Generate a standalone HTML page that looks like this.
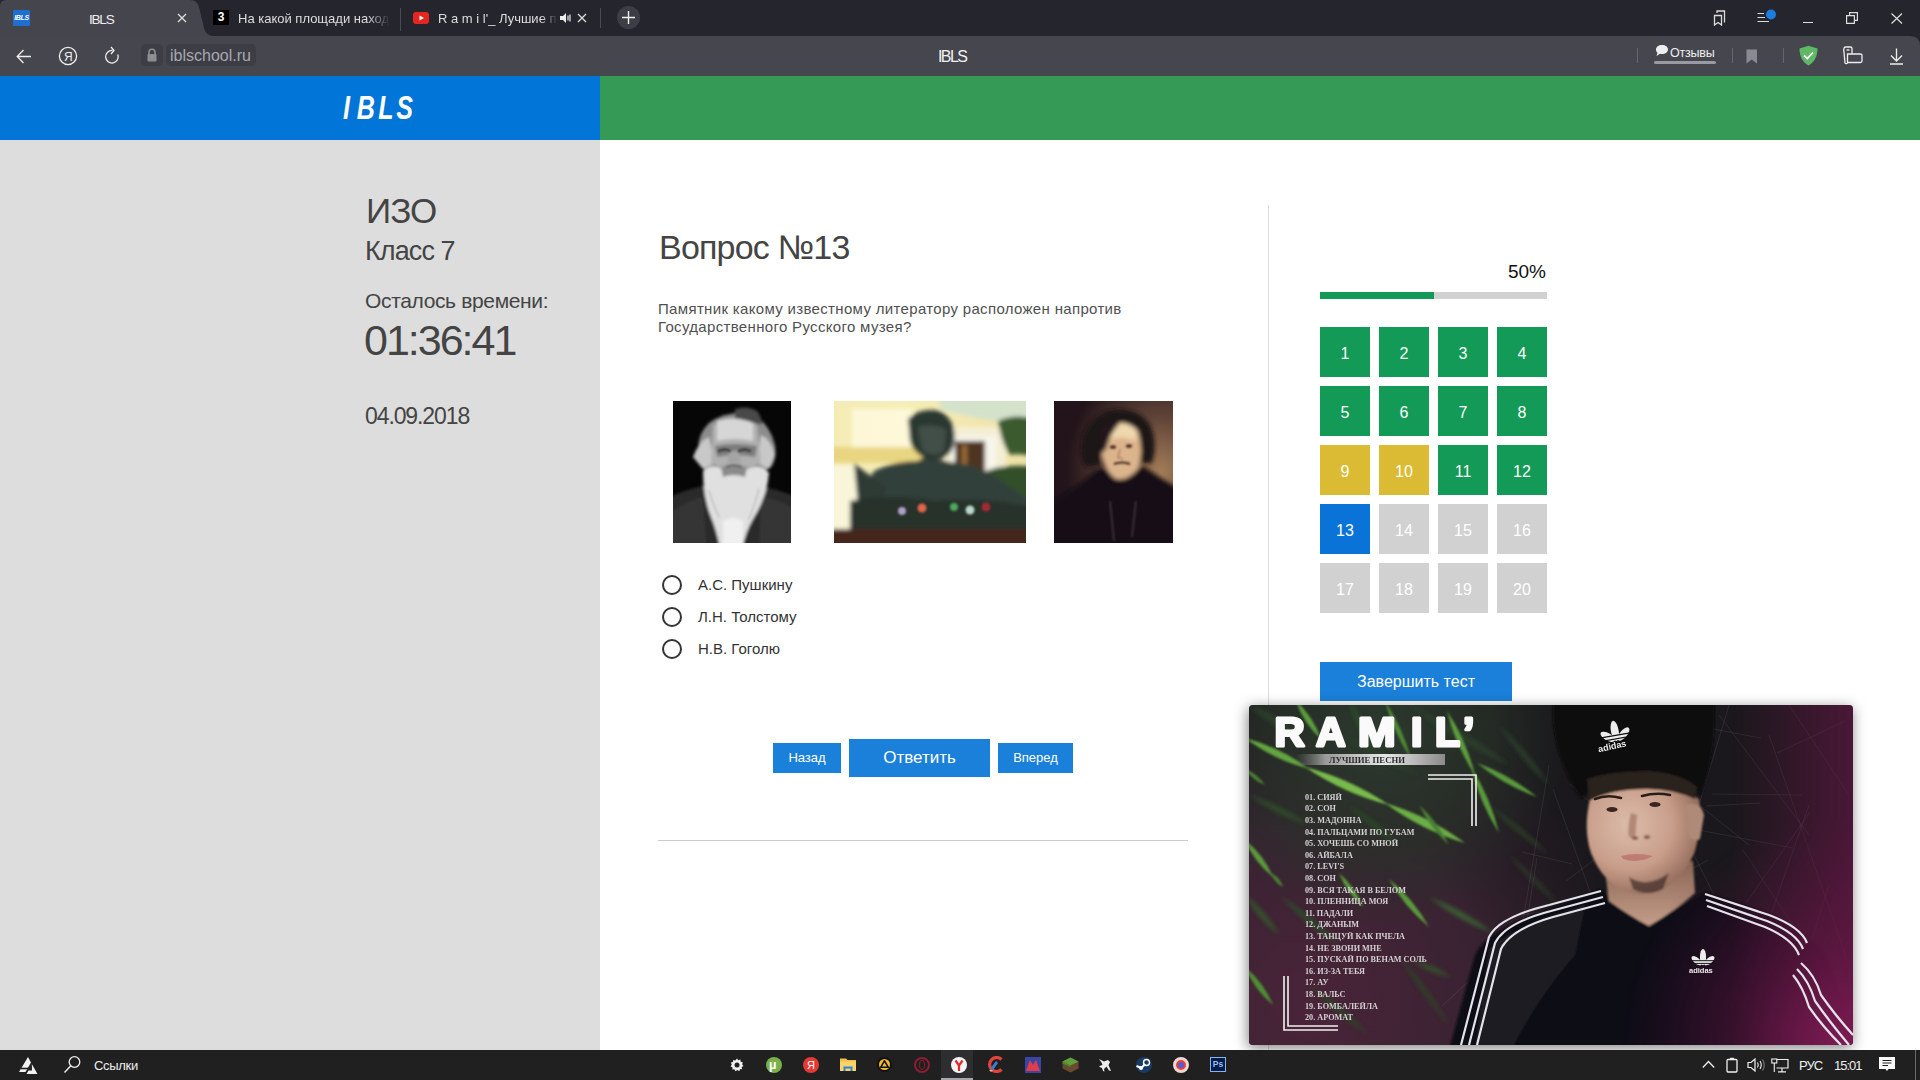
<!DOCTYPE html>
<html><head><meta charset="utf-8">
<style>
*{margin:0;padding:0;box-sizing:border-box}
html,body{width:1920px;height:1080px;overflow:hidden;background:#fff;font-family:"Liberation Sans",sans-serif}
.a{position:absolute}
#tabs{left:0;top:0;width:1920px;height:36px;background:#24252d}
#addr{left:0;top:36px;width:1920px;height:40px;background:#46464e}
#hb{left:0;top:76px;width:600px;height:64px;background:#0275d8}
#hg{left:600px;top:76px;width:1320px;height:64px;background:#369a57}
#side{left:0;top:140px;width:600px;height:910px;background:#dddddd}
#task{left:0;top:1050px;width:1920px;height:30px;background:#202020}
.t{white-space:nowrap;color:#444;line-height:1}
.cell{position:absolute;width:50px;height:50px;color:#fff;font-size:16px;text-align:center;line-height:53px}
.g{background:#129a56}.y{background:#dcbb34}.b{background:#0a73d7}.n{background:#d1d1d1}
.btn{position:absolute;background:#1a80d9;color:#fff;text-align:center;white-space:nowrap}
.radio{position:absolute;width:20px;height:20px;border:2px solid #333;border-radius:50%}
</style></head><body>
<div id="tabs" class="a"></div>
<div id="addr" class="a"></div>

<!-- active tab -->
<svg class="a" style="left:0;top:0" width="220" height="36" viewBox="0 0 220 36"><path d="M0 36 L0 6 Q0 0 6 0 L190 0 Q197 0 199 7 L204 28 Q206 36 214 36 Z" fill="#45454e"/></svg>
<div class="a" style="left:13px;top:10px;width:17px;height:16px;background:#1f6fd0;border-radius:1px;color:#fff;font:italic bold 7px/16px 'Liberation Sans',sans-serif;text-align:center;letter-spacing:-0.3px">IBLS</div>
<div class="a t" style="left:89px;top:13px;font-size:13.5px;color:#eee;letter-spacing:-1.2px">IBLS</div>
<svg class="a" style="left:177px;top:13px" width="10" height="10"><path d="M1 1L9 9M9 1L1 9" stroke="#ddd" stroke-width="1.3"/></svg>
<!-- tab2 -->
<div class="a" style="left:213px;top:10px;width:16px;height:15px;background:#000;color:#fff;font:bold 12px/15px 'Liberation Sans',sans-serif;text-align:center">3</div>
<div class="a t" style="left:238px;top:12px;padding-bottom:3px;font-size:13px;color:#ddd;width:152px;overflow:hidden;-webkit-mask-image:linear-gradient(90deg,#000 85%,transparent)">На какой площади находится</div>
<div class="a" style="left:400px;top:8px;width:1px;height:23px;background:#4a4b52"></div>
<!-- tab3 -->
<svg class="a" style="left:413px;top:12px" width="16" height="12"><rect x="0" y="0" width="16" height="12" rx="3" fill="#e52620"/><path d="M6.5 3.5L11 6L6.5 8.5Z" fill="#fff"/></svg>
<div class="a t" style="left:438px;top:12px;padding-bottom:3px;font-size:13px;color:#ddd;width:120px;overflow:hidden;-webkit-mask-image:linear-gradient(90deg,#000 86%,transparent)">R a m i l'_ Лучшие песни</div>
<svg class="a" style="left:560px;top:13px" width="11" height="10"><path d="M0 3H3L6 0V10L3 7H0Z" fill="#eee"/><path d="M8 2.5V7.5M10 1.5V8.5" stroke="#eee" stroke-width="1.2"/></svg>
<svg class="a" style="left:577px;top:13px" width="10" height="10"><path d="M1 1L9 9M9 1L1 9" stroke="#ddd" stroke-width="1.3"/></svg>
<div class="a" style="left:600px;top:8px;width:1px;height:20px;background:#4a4b52"></div>
<div class="a" style="left:617px;top:6px;width:23px;height:23px;border-radius:50%;background:#3c3d45"></div>
<svg class="a" style="left:622px;top:11px" width="13" height="13"><path d="M6.5 0V13M0 6.5H13" stroke="#eee" stroke-width="1.4"/></svg>
<!-- window controls -->
<svg class="a" style="left:1712px;top:10px" width="16" height="16"><path d="M2.5 5.5H9.5V15L6 12.5L2.5 15Z M5 3V1H12.5V12.5" fill="none" stroke="#ddd" stroke-width="1.3"/></svg>
<svg class="a" style="left:1756px;top:8px" width="22" height="16"><path d="M1.5 5.5H8M1.5 9.5H9M1.5 13.5H13" stroke="#ddd" stroke-width="1.2"/><circle cx="15" cy="6.5" r="5" fill="#1c7ce0"/></svg>
<div class="a" style="left:1803px;top:22px;width:10px;height:1px;background:#ddd"></div>
<svg class="a" style="left:1846px;top:12px" width="12" height="12"><path d="M0.6 3.6H8.4V11.4H0.6Z M3.6 3.6V0.6H11.4V8.4H8.4" fill="none" stroke="#ddd" stroke-width="1.2"/></svg>
<svg class="a" style="left:1891px;top:13px" width="12" height="11"><path d="M0.5 0.5L11 10.5M11 0.5L0.5 10.5" stroke="#ddd" stroke-width="1.2"/></svg>

<svg class="a" style="left:1910px;top:36px" width="10" height="10"><path d="M0 0H10V10Q10 0 0 0Z" fill="#24252d"/></svg>
<!-- address bar items -->
<svg class="a" style="left:16px;top:49px" width="16" height="15"><path d="M15 7.5H1.5M7.5 1L1.2 7.5L7.5 14" fill="none" stroke="#eee" stroke-width="1.3"/></svg>
<svg class="a" style="left:58px;top:46px" width="20" height="20"><circle cx="10" cy="10" r="8.6" fill="none" stroke="#eee" stroke-width="1.3"/><text x="10.3" y="14.8" font-family="Liberation Sans" font-size="12" fill="#eee" text-anchor="middle">Я</text></svg>
<svg class="a" style="left:104px;top:46px" width="17" height="19"><path d="M13.8 8.5A6.3 6.3 0 1 1 8.5 4.5" fill="none" stroke="#eee" stroke-width="1.3"/><path d="M7 1L10 4.5L7 8" fill="none" stroke="#eee" stroke-width="1.3"/></svg>
<div class="a" style="left:141px;top:44px;width:22px;height:22px;border-radius:5px;background:#3d3d45"></div>
<svg class="a" style="left:146px;top:48px" width="12" height="14"><path d="M3 6V4.2A3 3 0 0 1 9 4.2V6" fill="none" stroke="#8d8d94" stroke-width="1.6"/><rect x="1.5" y="6" width="9" height="7.5" rx="1" fill="#8d8d94"/></svg>
<div class="a" style="left:166px;top:44px;width:90px;height:22px;border-radius:5px;background:#3d3d45"></div>
<div class="a t" style="left:170px;top:48px;font-size:16px;color:#a8a8b0;letter-spacing:0px">iblschool.ru</div>
<div class="a t" style="left:938px;top:49px;font-size:16px;color:#f2f2f2;letter-spacing:-1.6px">IBLS</div>

<div class="a" style="left:1637px;top:48px;width:1px;height:15px;background:#66666e"></div>
<svg class="a" style="left:1655px;top:44px" width="14" height="13"><path d="M7 1C10.5 1 13 3 13 5.5C13 8 10.5 10 7 10C6.3 10 5.6 9.9 5 9.7L1.5 12L2.5 8.8C1.5 8 1 6.8 1 5.5C1 3 3.5 1 7 1Z" fill="#eee"/></svg>
<div class="a t" style="left:1670px;top:46.5px;font-size:12.5px;color:#eee;letter-spacing:-0.2px">Отзывы</div>
<div class="a" style="left:1654px;top:61px;width:62px;height:3px;border-radius:2px;background:#9a9aa2"></div>
<div class="a" style="left:1732px;top:48px;width:1px;height:15px;background:#66666e"></div>
<svg class="a" style="left:1746px;top:49px" width="12" height="15"><path d="M0.5 0.5H11V14.5L5.75 10.5L0.5 14.5Z" fill="#8a8a92"/></svg>
<div class="a" style="left:1783px;top:48px;width:1px;height:15px;background:#66666e"></div>
<svg class="a" style="left:1798px;top:45px" width="21" height="21"><path d="M10.5 0.8L19.5 3.5C19.5 12 16 17.5 10.5 20.5C5 17.5 1.5 12 1.5 3.5Z" fill="#5fb865"/><path d="M6 10.5L9.3 13.6L15 7.5" fill="none" stroke="#fff" stroke-width="1.8"/></svg>
<svg class="a" style="left:1842px;top:46px" width="21" height="19"><path d="M3.5 1H8.5A1.5 1.5 0 0 1 10 2.5V8H5.5V17A1.5 1.5 0 0 1 3 17L2 6A5 5 0 0 1 2 2.5A1.5 1.5 0 0 1 3.5 1Z M10 8H18.5A1.5 1.5 0 0 1 20 9.5V15A1.5 1.5 0 0 1 18.5 16.5H6" fill="none" stroke="#eee" stroke-width="1.3"/><path d="M4.5 4H7.5" stroke="#eee" stroke-width="1.3"/></svg>
<svg class="a" style="left:1889px;top:48px" width="15" height="17"><path d="M7.5 0.5V13M2 7.5L7.5 13L13 7.5M1 16H14" fill="none" stroke="#eee" stroke-width="1.3"/></svg>
<div id="hb" class="a"></div>
<div id="hg" class="a"></div>
<svg class="a" style="left:340px;top:88px" width="80" height="36"><g transform="scale(0.76,1)" font-family="Liberation Sans" font-style="italic" font-weight="bold" font-size="33" fill="#fff"><text x="4" y="31.5">I</text><text x="22" y="31.5">B</text><text x="50.5" y="31.5">L</text><text x="74" y="31.5">S</text></g></svg>
<div id="side" class="a"></div>

<!-- sidebar text -->
<div class="a t" style="left:366px;top:193px;font-size:35px;letter-spacing:-1px">ИЗО</div>
<div class="a t" style="left:365px;top:238px;font-size:27px;letter-spacing:-0.9px">Класс 7</div>
<div class="a t" style="left:365px;top:290px;font-size:21px;letter-spacing:-0.35px">Осталось времени:</div>
<div class="a t" style="left:364px;top:319px;font-size:43px;letter-spacing:-2px">01:36:41</div>
<div class="a t" style="left:365px;top:405px;font-size:23px;letter-spacing:-1.1px">04.09.2018</div>

<!-- question -->
<div class="a t" style="left:659px;top:230px;font-size:34px;letter-spacing:-0.8px">Вопрос №13</div>
<div class="a t" style="left:658px;top:300px;font-size:15px;line-height:18px;letter-spacing:0.33px;color:#505050">Памятник какому известному литератору расположен напротив<br>Государственного Русского музея?</div>


<!-- portraits -->
<svg class="a" style="left:673px;top:401px" width="118" height="142" viewBox="0 0 118 142">
<defs><filter id="b1" x="-20%" y="-20%" width="140%" height="140%"><feGaussianBlur stdDeviation="1.8"/></filter><filter id="b1s" x="-50%" y="-50%" width="200%" height="200%"><feGaussianBlur stdDeviation="0.9"/></filter></defs>
<rect width="118" height="142" fill="#060606"/>
<g filter="url(#b1)">
<path d="M-10 100Q10 88 36 84L82 84Q106 88 128 98V152H-10Z" fill="#2a2a2a"/>
<path d="M0 110Q14 100 30 96L34 152H-10Z M118 106Q104 98 88 96L86 152H128Z" fill="#343434"/>
<path d="M26 56Q22 36 36 22Q52 10 76 12Q96 20 102 44Q104 58 98 66L92 70H32Z" fill="#8c8c8c"/>
<path d="M62 8Q74 4 84 10Q90 18 88 24Q74 18 62 20Z" fill="#4a4a4a"/>
<path d="M20 56Q26 40 36 36L42 62L30 68Z M102 54Q98 38 88 34L84 62L96 68Z" fill="#c8c8c8"/>
<path d="M40 24Q60 14 84 24L88 62Q62 74 38 62Z" fill="#b0b0b0"/>
<path d="M44 20Q62 14 80 22L80 40Q62 36 44 40Z" fill="#d6d6d6"/>
<path d="M42 45Q62 41 84 45L82 56Q62 52 44 56Z" fill="#7c7c7c"/>
<path d="M56 50L66 50L68 64L54 64Z" fill="#a4a4a4"/>
<path d="M30 70Q38 62 50 68Q62 74 74 68Q88 62 96 72Q94 96 80 118Q72 132 68 152H48Q44 130 38 116Q30 96 30 70Z" fill="#e0e0e0"/>
<path d="M48 66Q60 62 74 66L72 76Q60 72 50 76Z" fill="#8a8a8a"/>
<path d="M50 120Q60 114 70 120L70 152H50Z" fill="#f0f0f0"/>
</g>
<g filter="url(#b1s)" fill="none" stroke-linecap="round">
<path d="M46 50Q52 47 57 50M66 50Q72 47 77 50" stroke="#2a2a2a" stroke-width="2"/>
<path d="M54 66Q61 63 68 66" stroke="#5a5a5a" stroke-width="1.6"/>
<path d="M36 90Q40 104 46 116M86 88Q82 104 76 118" stroke="#c0c0c0" stroke-width="1.5"/>
</g>
</svg>

<svg class="a" style="left:834px;top:401px" width="192" height="142" viewBox="0 0 192 142">
<defs><filter id="b2" x="-20%" y="-20%" width="140%" height="140%"><feGaussianBlur stdDeviation="2"/></filter><filter id="b2s" x="-50%" y="-50%" width="200%" height="200%"><feGaussianBlur stdDeviation="1.1"/></filter>
<linearGradient id="pbg" x1="0" y1="0" x2="1" y2="0"><stop offset="0" stop-color="#f4ecb4"/><stop offset="0.35" stop-color="#f6eeb8"/><stop offset="1" stop-color="#efe2a6"/></linearGradient></defs>
<rect width="192" height="142" fill="url(#pbg)"/>
<g filter="url(#b2)">
<rect x="18" y="8" width="60" height="40" fill="#fffae0" opacity="0.8"/>
<rect x="-10" y="46" width="100" height="16" fill="#e6cf74" opacity="0.8"/>
<rect x="-10" y="64" width="34" height="70" fill="#faf6dc" opacity="0.9"/>
<path d="M106 -10H202V20L176 22Q140 18 106 8Z" fill="#d4e2cc"/>
<rect x="112" y="26" width="60" height="70" fill="#f4eed4"/>
<rect x="117" y="35" width="45" height="48" fill="#f8f6ec"/>
<rect x="121" y="40" width="30" height="42" fill="#4e3420"/>
<rect x="128" y="44" width="5" height="36" fill="#9a6a38"/>
<path d="M164 20Q180 12 202 18V56Q186 52 176 54Q168 44 164 20Z" fill="#3a5a2e"/>
<path d="M148 72Q168 62 202 66V132H152Z" fill="#33502c"/>
<path d="M40 70Q60 60 84 60L90 56Q110 60 124 62Q150 66 168 80Q186 92 200 104V132H18Q18 110 26 96Q32 82 40 70Z" fill="#33403a"/>
<path d="M20 62L30 70L52 86L44 110L24 104Z" fill="#2e3a34"/>
<path d="M74 18Q86 6 106 10Q124 20 120 44Q116 58 98 60Q80 54 76 40Z" fill="#2c3832"/>
<path d="M84 26Q98 22 112 28L110 50Q98 58 88 48Z" fill="#434f48"/>
<path d="M16 100Q60 92 100 100Q150 96 200 106V132H16Z" fill="#27302c"/>
<rect x="-10" y="128" width="212" height="24" fill="#45261e"/>
</g>
<g filter="url(#b2s)">
<circle cx="68" cy="110" r="4" fill="#b0a0c8"/><circle cx="88" cy="107" r="4.5" fill="#e0664a"/><circle cx="120" cy="106" r="4" fill="#50a860"/><circle cx="136" cy="109" r="4.5" fill="#b8d8cc"/><circle cx="152" cy="106" r="4.5" fill="#a02a34"/>
</g>
</svg>

<svg class="a" style="left:1054px;top:401px" width="119" height="142" viewBox="0 0 119 142">
<defs><filter id="b3" x="-20%" y="-20%" width="140%" height="140%"><feGaussianBlur stdDeviation="1.9"/></filter><filter id="b3s" x="-50%" y="-50%" width="200%" height="200%"><feGaussianBlur stdDeviation="0.8"/></filter>
<radialGradient id="gbg" cx="0.9" cy="0.5" r="0.8"><stop offset="0" stop-color="#a27c58"/><stop offset="0.5" stop-color="#5e4236"/><stop offset="1" stop-color="#22141a"/></radialGradient></defs>
<rect width="119" height="142" fill="url(#gbg)"/>
<g filter="url(#b3)">
<path d="M-10 106Q16 92 44 68L90 66Q110 80 129 90V152H-10Z" fill="#160c12"/>
<path d="M28 58Q24 22 54 10Q82 4 96 24Q104 42 98 62L84 62L82 34Q66 26 50 34L46 64L32 66Z" fill="#1e1216"/>
<path d="M48 32Q64 20 84 30Q90 50 84 68Q74 80 62 78Q50 70 47 50Z" fill="#dcb48c"/>
<path d="M56 24Q70 18 82 28L82 40Q70 34 56 38Z" fill="#f0d8ae"/>
<path d="M46 28Q54 20 66 22Q56 32 52 48L46 54Z" fill="#24161a"/>
</g>
<g filter="url(#b3s)">
<ellipse cx="59" cy="46" rx="3.2" ry="1.8" fill="#4a2c22"/><ellipse cx="75" cy="45" rx="3.2" ry="1.8" fill="#4a2c22"/>
<path d="M66 48L64 57L69 58" stroke="#b08060" stroke-width="1.5" fill="none"/>
<path d="M60 63Q68 60 76 63" stroke="#3a2218" stroke-width="2.2" fill="none"/>
<path d="M56 100L60 140M82 100L78 136" stroke="#5a5058" stroke-width="1" fill="none"/>
</g>
</svg>
<div class="radio" style="left:662px;top:575px"></div>
<div class="radio" style="left:662px;top:607px"></div>
<div class="radio" style="left:662px;top:639px"></div>
<div class="a t" style="left:698px;top:577px;font-size:15px;color:#333">А.С. Пушкину</div>
<div class="a t" style="left:698px;top:609px;font-size:15px;color:#333">Л.Н. Толстому</div>
<div class="a t" style="left:698px;top:641px;font-size:15px;color:#333">Н.В. Гоголю</div>

<div class="btn" style="left:773px;top:743px;width:68px;height:30px;line-height:30px;font-size:13px">Назад</div>
<div class="btn" style="left:849px;top:739px;width:141px;height:38px;line-height:38px;font-size:17px">Ответить</div>
<div class="btn" style="left:998px;top:743px;width:75px;height:30px;line-height:30px;font-size:13px">Вперед</div>
<div class="a" style="left:658px;top:840px;width:530px;height:1px;background:#ccc"></div>

<!-- right panel -->
<div class="a" style="left:1268px;top:205px;width:1px;height:845px;background:#ddd"></div>
<div class="a t" style="left:1480px;top:262px;width:66px;text-align:right;font-size:19px;color:#111">50%</div>
<div class="a" style="left:1320px;top:292px;width:227px;height:7px;background:#d1d1d1"></div>
<div class="a" style="left:1320px;top:292px;width:114px;height:7px;background:#129a56"></div>

<div class="cell g" style="left:1320px;top:327px">1</div>
<div class="cell g" style="left:1379px;top:327px">2</div>
<div class="cell g" style="left:1438px;top:327px">3</div>
<div class="cell g" style="left:1497px;top:327px">4</div>
<div class="cell g" style="left:1320px;top:386px">5</div>
<div class="cell g" style="left:1379px;top:386px">6</div>
<div class="cell g" style="left:1438px;top:386px">7</div>
<div class="cell g" style="left:1497px;top:386px">8</div>
<div class="cell y" style="left:1320px;top:445px">9</div>
<div class="cell y" style="left:1379px;top:445px">10</div>
<div class="cell g" style="left:1438px;top:445px">11</div>
<div class="cell g" style="left:1497px;top:445px">12</div>
<div class="cell b" style="left:1320px;top:504px">13</div>
<div class="cell n" style="left:1379px;top:504px">14</div>
<div class="cell n" style="left:1438px;top:504px">15</div>
<div class="cell n" style="left:1497px;top:504px">16</div>
<div class="cell n" style="left:1320px;top:563px">17</div>
<div class="cell n" style="left:1379px;top:563px">18</div>
<div class="cell n" style="left:1438px;top:563px">19</div>
<div class="cell n" style="left:1497px;top:563px">20</div>

<div class="btn" style="left:1320px;top:662px;width:192px;height:39px;line-height:39px;font-size:16px">Завершить тест</div>


<!-- video overlay -->
<div class="a" style="left:1249px;top:705px;width:604px;height:340px;border-radius:4px;overflow:hidden;box-shadow:-1px 3px 14px rgba(0,0,0,0.5)">
<svg width="604" height="340" viewBox="0 0 604 340" style="display:block">
<defs>
<radialGradient id="vmag" cx="604" cy="340" r="230" gradientUnits="userSpaceOnUse"><stop offset="0" stop-color="#a8206a" stop-opacity="0.9"/><stop offset="0.45" stop-color="#6a1646" stop-opacity="0.55"/><stop offset="1" stop-color="#50103a" stop-opacity="0"/></radialGradient>
<linearGradient id="vmagr" x1="0" y1="0" x2="1" y2="0"><stop offset="0.8" stop-color="#6a1848" stop-opacity="0"/><stop offset="1" stop-color="#6a1848" stop-opacity="0.6"/></linearGradient>
<radialGradient id="vpur" cx="60" cy="300" r="320" gradientUnits="userSpaceOnUse"><stop offset="0" stop-color="#4a2438"/><stop offset="0.55" stop-color="#3c2434" stop-opacity="0.9"/><stop offset="1" stop-color="#34202e" stop-opacity="0"/></radialGradient>
<radialGradient id="vgrn" cx="130" cy="30" r="190" gradientUnits="userSpaceOnUse"><stop offset="0" stop-color="#2c3a2e"/><stop offset="0.6" stop-color="#283228" stop-opacity="0.7"/><stop offset="1" stop-color="#26302a" stop-opacity="0"/></radialGradient>
<linearGradient id="ban" x1="0" y1="0" x2="1" y2="0"><stop offset="0" stop-color="#777" stop-opacity="0"/><stop offset="0.2" stop-color="#999"/><stop offset="0.6" stop-color="#e8e8e8"/><stop offset="1" stop-color="#8a8a8a"/></linearGradient>
<filter id="vb" x="-10%" y="-10%" width="120%" height="120%"><feGaussianBlur stdDeviation="1.1"/></filter>
<filter id="vb2" x="-10%" y="-10%" width="120%" height="120%"><feGaussianBlur stdDeviation="2.2"/></filter>
</defs>
<rect width="604" height="340" fill="#1a181c"/>
<rect width="604" height="340" fill="url(#vpur)"/>
<rect width="604" height="340" fill="url(#vgrn)"/>
<g filter="url(#vb2)"><path d="M180.0 192.0Q209.1 215.2 244.0 228.0Q214.9 204.8 180.0 192.0Z" fill="#3a5e30" opacity="1.0"/><path d="M164.0 256.0Q181.1 268.6 202.0 272.0Q184.9 259.4 164.0 256.0Z" fill="#34522c" opacity="1.0"/><path d="M0.0 90.0Q27.3 110.4 60.0 120.0Q32.7 99.6 0.0 90.0Z" fill="#2e4a2a" opacity="1.0"/><path d="M30.0 190.0Q56.2 219.6 90.0 240.0Q63.8 210.4 30.0 190.0Z" fill="#2e4a2a" opacity="1.0"/><path d="M100.0 100.0Q121.3 124.7 150.0 140.0Q128.7 115.3 100.0 100.0Z" fill="#2a4428" opacity="1.0"/><path d="M60.0 280.0Q86.2 309.6 120.0 330.0Q93.8 300.4 60.0 280.0Z" fill="#2e4028" opacity="1.0"/><path d="M150.0 250.0Q170.9 287.9 200.0 320.0Q179.1 282.1 150.0 250.0Z" fill="#2e4028" opacity="1.0"/><path d="M240.0 100.0Q266.8 128.8 300.0 150.0Q273.2 121.2 240.0 100.0Z" fill="#2a3a28" opacity="1.0"/><path d="M100.0 -4.0Q106.6 22.7 124.0 44.0Q117.4 17.3 100.0 -4.0Z" fill="#2e4a2a" opacity="1.0"/><path d="M-4.0 190.0Q8.4 213.9 30.0 230.0Q17.6 206.1 -4.0 190.0Z" fill="#34522c" opacity="1.0"/><path d="M160.0 0.0Q205.9 36.9 260.0 60.0Q214.1 23.1 160.0 0.0Z" fill="#2c3e2c" opacity="1.0"/><path d="M0.0 0.0Q20.9 21.9 50.0 30.0Q29.1 8.1 0.0 0.0Z" fill="#2c3e2c" opacity="1.0"/><path d="M90.0 30.0Q126.9 56.3 170.0 70.0Q133.1 43.7 90.0 30.0Z" fill="#2a3c2a" opacity="1.0"/><path d="M250.0 20.0Q270.4 53.8 300.0 80.0Q279.6 46.2 250.0 20.0Z" fill="#2a3a2a" opacity="1.0"/><path d="M260.0 150.0Q281.5 178.5 310.0 200.0Q288.5 171.5 260.0 150.0Z" fill="#2a3628" opacity="1.0"/></g>
<g filter="url(#vb)"><path d="M-4.0 33.0Q24.9 54.8 60.0 64.0Q31.1 42.2 -4.0 33.0Z" fill="#62a440" opacity="1.0"/><path d="M56.0 62.0Q94.7 88.3 140.0 100.0Q101.3 73.7 56.0 62.0Z" fill="#78ba4c" opacity="1.0"/><path d="M136.0 98.0Q172.4 125.2 216.0 138.0Q179.6 110.8 136.0 98.0Z" fill="#6aae44" opacity="1.0"/><path d="M47.0 -4.0Q54.5 18.3 72.0 34.0Q64.5 11.7 47.0 -4.0Z" fill="#5a9c3c" opacity="1.0"/><path d="M198.0 6.0Q206.5 40.4 226.0 70.0Q217.5 35.6 198.0 6.0Z" fill="#5c9c3c" opacity="1.0"/><path d="M222.0 62.0Q230.5 97.3 250.0 128.0Q241.5 92.7 222.0 62.0Z" fill="#5a9a3a" opacity="1.0"/><path d="M228.0 58.0Q255.0 80.2 288.0 92.0Q261.0 69.8 228.0 58.0Z" fill="#5a983a" opacity="1.0"/><path d="M136.0 -4.0Q144.4 27.0 162.0 54.0Q153.6 23.0 136.0 -4.0Z" fill="#4e8a34" opacity="1.0"/><path d="M-4.0 135.0Q5.2 157.1 24.0 172.0Q14.8 149.9 -4.0 135.0Z" fill="#5a9a3a" opacity="1.0"/><path d="M-4.0 262.0Q5.2 284.6 24.0 300.0Q14.8 277.4 -4.0 262.0Z" fill="#4e8e36" opacity="1.0"/><path d="M140.0 174.0Q155.4 201.8 180.0 222.0Q164.6 194.2 140.0 174.0Z" fill="#5a9a3c" opacity="1.0"/><path d="M90.0 168.0Q97.9 187.9 114.0 202.0Q106.1 182.1 90.0 168.0Z" fill="#5a9a3a" opacity="1.0"/><path d="M-4.0 64.0Q3.5 75.1 16.0 80.0Q8.5 68.9 -4.0 64.0Z" fill="#4a8232" opacity="1.0"/><path d="M22.0 168.0Q25.0 177.6 34.0 182.0Q31.0 172.4 22.0 168.0Z" fill="#4a8232" opacity="1.0"/><path d="M170.0 100.0Q181.0 123.0 200.0 140.0Q189.0 117.0 170.0 100.0Z" fill="#4a8034" opacity="1.0"/></g>
<g stroke="#d0d0d0" stroke-width="0.6" opacity="0.16" fill="none"><path d="M480 0L420 200M520 30L600 260M300 60L260 300M560 100L480 330M350 20L500 140M250 280L330 340M470 10L560 130M540 0L600 90M430 120L520 300M580 180L530 340M371 51L349 95M444 124L544 143M273 147L323 159M406 281L468 306M476 322L455 407M596 16L528 48M310 40L388 154M322 198L286 274M448 21L512 33M494 145L555 237M416 102L317 176M344 195L333 340M511 98L457 101M404 257L491 303M273 227L193 301M561 107L497 198M459 155L325 229M423 226L545 249M483 338L420 377M393 227L488 234M318 40L448 64M304 84L353 220M288 153L265 297M542 294L599 363M383 301L326 308M321 79L394 145M463 89L553 90M387 193L265 211"/></g>
<!-- person -->
<defs>
<radialGradient id="skin" cx="380" cy="120" r="80" gradientUnits="userSpaceOnUse"><stop offset="0" stop-color="#dcbcaa"/><stop offset="0.55" stop-color="#c89e8a"/><stop offset="1" stop-color="#8a6252"/></radialGradient>
<linearGradient id="neck" x1="0" y1="0" x2="0" y2="1"><stop offset="0" stop-color="#8a6454"/><stop offset="1" stop-color="#c49e8a"/></linearGradient>
</defs>
<g filter="url(#vb)">
<path d="M200 345L226 250Q236 226 300 204L352 184Q380 200 400 222Q430 200 456 187L520 208Q556 224 578 252L612 345Z" fill="#111014"/>
<path d="M240 244Q256 228 300 212L336 200L326 250Q290 290 262 345H226Z" fill="#1e1e24" opacity="0.9"/>
<path d="M356 166L360 196Q382 212 400 221Q426 206 446 188L444 156Z" fill="url(#neck)"/>
<path d="M341 94Q334 124 342 148Q354 178 378 187Q394 192 410 186Q436 172 446 146Q454 118 450 94Q430 82 396 80Q360 82 341 94Z" fill="url(#skin)"/>
<path d="M438 100Q452 96 455 110L451 134Q444 138 440 130Z" fill="#b08a78"/>
<path d="M380 172Q398 184 420 168L414 184Q398 192 384 184Z" fill="#3e2c28" opacity="0.7"/>
<path d="M306 -20Q296 40 332 94Q346 78 400 74Q440 76 452 90Q470 40 464 -20Z" fill="#0d0d0f"/>
<path d="M338 74Q360 66 400 66Q432 68 448 82L446 94Q424 84 398 84Q362 84 340 96Z" fill="#2c201c"/>
</g>
<g fill="none" stroke-linecap="round">
<path d="M346 94Q358 89 372 93M393 91Q407 87 421 90" stroke="#2a1c18" stroke-width="2.6"/>
</g>
<g>
<ellipse cx="363" cy="104.5" rx="5.5" ry="2.4" fill="#3a2620"/><ellipse cx="406" cy="99.5" rx="5.5" ry="2.4" fill="#3a2620"/>
<g filter="url(#vb)"><path d="M382 108Q378 124 380 132L386 134L388 110Z" fill="#a87c6a" opacity="0.8"/><ellipse cx="386" cy="133" rx="3" ry="1.6" fill="#7a5040"/><ellipse cx="398" cy="132" rx="3" ry="1.6" fill="#7a5040"/></g>
<path d="M372 151Q388 147 404 151Q390 159 374 154Z" fill="#c07c74"/>
</g>
<rect width="604" height="340" fill="url(#vmag)"/>
<rect width="604" height="340" fill="url(#vmagr)"/>
<g fill="none" stroke="#e4e2ea" stroke-width="2.2">
<path d="M352 186L300 200Q250 212 240 232L212 340"/>
<path d="M354 192L302 206Q256 218 246 238L220 340"/>
<path d="M356 198L304 212Q262 224 252 244L228 340"/>
<path d="M456 189L520 210Q552 222 558 238M552 258Q566 270 572 290Q586 310 604 330"/>
<path d="M457 195L518 216Q548 228 554 244M548 264Q560 276 566 296Q580 316 600 340"/>
<path d="M458 201L516 222Q544 234 550 250M544 270Q554 282 560 302Q574 322 592 340"/>
</g>
<defs><g id="tref"><ellipse cx="-7" cy="3" rx="3.2" ry="7" transform="rotate(-50 -7 3)"/><ellipse cx="0" cy="-1" rx="3.4" ry="9"/><ellipse cx="7" cy="3" rx="3.2" ry="7" transform="rotate(50 7 3)"/></g></defs>
<g fill="#ececec">
<g transform="translate(366 27) rotate(-10) scale(1.15)"><use href="#tref"/><path d="M-14 3H14M-14 6H14" stroke="#0d0d0f" stroke-width="1.1"/></g>
<text x="349" y="45" font-family="Liberation Sans" font-weight="bold" font-size="9" transform="rotate(-12 360 42)">adidas</text>
<g transform="translate(454 253) scale(0.9)"><use href="#tref"/><path d="M-14 3H14M-14 6H14" stroke="#111014" stroke-width="1.1"/></g>
<text x="440" y="268" font-family="Liberation Sans" font-weight="bold" font-size="7.5">adidas</text>
</g>
<!-- text -->
<g font-family="Liberation Sans" font-weight="bold" font-size="41" fill="#fafafa" stroke="#fafafa" stroke-width="3" stroke-linejoin="round"><text x="25" y="41" transform="scale(1.02,1)">R</text><text x="67" y="41">A</text><text x="109" y="41" transform="translate(109 0) scale(1.1,1) translate(-109 0)">M</text><text x="162" y="41">I</text><text x="186" y="41">L</text><text x="214" y="41">’</text></g>
<rect x="46" y="49" width="150" height="11" fill="url(#ban)"/>
<text x="80" y="58" font-family="Liberation Serif" font-weight="bold" font-size="8.5" fill="#2a2a2a" textLength="76" lengthAdjust="spacingAndGlyphs">ЛУЧШИЕ ПЕСНИ</text>
<path d="M179 70H227V121M179 74H223V121" fill="none" stroke="#f0f0f0" stroke-width="1.6"/>
<path d="M35 271V325H89M39 271V321H89" fill="none" stroke="#f0f0f0" stroke-width="1.6"/>
<g font-family="Liberation Serif" font-weight="bold" font-size="8.2" fill="#d4d0d4"><text x="56" y="94.8">01. СИЯЙ</text><text x="56" y="106.4">02. СОН</text><text x="56" y="118.0">03. МАДОННА</text><text x="56" y="129.6">04. ПАЛЬЦАМИ ПО ГУБАМ</text><text x="56" y="141.2">05. ХОЧЕШЬ СО МНОЙ</text><text x="56" y="152.8">06. АЙБАЛА</text><text x="56" y="164.4">07. LEVI'S</text><text x="56" y="176.0">08. СОН</text><text x="56" y="187.6">09. ВСЯ ТАКАЯ В БЕЛОМ</text><text x="56" y="199.2">10. ПЛЕННИЦА МОЯ</text><text x="56" y="210.8">11. ПАДАЛИ</text><text x="56" y="222.4">12. ДЖАНЫМ</text><text x="56" y="234.0">13. ТАНЦУЙ КАК ПЧЕЛА</text><text x="56" y="245.6">14. НЕ ЗВОНИ МНЕ</text><text x="56" y="257.2">15. ПУСКАЙ ПО ВЕНАМ СОЛЬ</text><text x="56" y="268.8">16. ИЗ-ЗА ТЕБЯ</text><text x="56" y="280.4">17. АУ</text><text x="56" y="292.0">18. ВАЛЬС</text><text x="56" y="303.6">19. БОМБАЛЕЙЛА</text><text x="56" y="315.2">20. АРОМАТ</text></g>
</svg>
</div>
<div id="task" class="a"></div>
<svg class="a" style="left:18px;top:1056px" width="20" height="19"><path d="M10 1L13 6.5L7.5 16H1Z" fill="#f2f2f2"/><path d="M13.8 8L19.5 18H8.5L10.5 14.5H14Z" fill="#f2f2f2"/><path d="M3 12.5H11" stroke="#202022" stroke-width="1.6"/></svg>
<svg class="a" style="left:63px;top:1055px" width="18" height="19"><circle cx="11.5" cy="7" r="5.3" fill="none" stroke="#eee" stroke-width="1.3"/><path d="M7.8 10.8L1.5 17.5" stroke="#eee" stroke-width="1.4"/></svg>
<div class="a t" style="left:94px;top:1058.5px;font-size:13px;color:#eee;letter-spacing:-0.3px">Ссылки</div>

<svg class="a" style="left:730px;top:1058px" width="14" height="14" viewBox="0 0 14 14"><path d="M7 0.5L8.3 2.3L10.4 1.6L10.6 3.8L12.8 4.2L12.1 6.3L13.5 7.9L11.6 9L12.2 11.2L10 11.1L9.3 13.2L7.3 12L5.5 13.3L4.5 11.3L2.3 11.6L2.6 9.4L0.6 8.5L1.8 6.6L0.8 4.6L3 4.1L3.2 1.9L5.3 2.5Z" fill="#f0f0f0"/><circle cx="7" cy="7" r="2.5" fill="#202022"/></svg>
<div class="a" style="left:766px;top:1057px;width:16px;height:16px;border-radius:50%;background:#79b04a"></div>
<div class="a t" style="left:769px;top:1058px;font:bold 13px/1 'Liberation Sans';color:#fff">µ</div>
<div class="a" style="left:803px;top:1057px;width:16px;height:16px;border-radius:50%;background:#e33a35;color:#fff;font:11px/16px 'Liberation Sans';text-align:center">Я</div>
<svg class="a" style="left:840px;top:1057px" width="16" height="15"><path d="M0 1.5H6L7.5 3H16V14H0Z" fill="#f1c14c"/><rect x="0" y="4.5" width="16" height="9.5" fill="#f7d46a"/><path d="M3.5 14V9.5H12.5V14H10.5V11.5H5.5V14Z" fill="#2f7fd8"/></svg>
<div class="a" style="left:877px;top:1057px;width:15px;height:15px;border-radius:50%;background:#f5b932;border:2px solid #111"></div>
<svg class="a" style="left:880px;top:1060px" width="9" height="8"><path d="M4.5 0.8L8.2 7.2H0.8Z" fill="none" stroke="#111" stroke-width="1.6"/></svg>
<div class="a" style="left:914px;top:1057px;width:16px;height:16px;border-radius:50%;border:2.5px solid #8e1c32"></div>
<div class="a" style="left:919px;top:1060px;width:6px;height:10px;border-radius:50%;border:1.5px solid #8e1c32"></div>
<div class="a" style="left:941px;top:1050px;width:32px;height:30px;background:#2e2e30"></div>
<div class="a" style="left:941px;top:1078px;width:32px;height:2px;background:#a8a8a8"></div>
<div class="a" style="left:951px;top:1057px;width:16px;height:16px;border-radius:50%;background:#f4f4f4"></div>
<svg class="a" style="left:951px;top:1057px" width="16" height="16"><path d="M4.5 3.5L8 8.5L11.5 3.5M8 8.5V14" fill="none" stroke="#e02a2a" stroke-width="2.2"/></svg>
<svg class="a" style="left:987px;top:1056px" width="18" height="17"><path d="M14.5 3.5A7 7 0 1 0 14.5 13.5" fill="none" stroke="#e2453a" stroke-width="3.2"/><path d="M3 13L9 5L11 7L6 14Z" fill="#3f7bd1"/><path d="M2 14L6 14L4 16Z" fill="#f0c080"/></svg>
<svg class="a" style="left:1025px;top:1057px" width="16" height="16"><rect width="16" height="16" fill="#3a46a6"/><path d="M1 14L5 3L8 8L11 3L15 14Z" fill="#e23b4a"/></svg>
<svg class="a" style="left:1062px;top:1057px" width="17" height="16"><path d="M8.5 0.5L16.5 4.5V11.5L8.5 15.5L0.5 11.5V4.5Z" fill="#6a4a2f"/><path d="M8.5 0.5L16.5 4.5L8.5 8.5L0.5 4.5Z" fill="#5fa03a"/><path d="M0.5 4.5L8.5 8.5V10L0.5 6.5Z" fill="#4c8a2c"/></svg>
<svg class="a" style="left:1098px;top:1057px" width="16" height="16"><path d="M1 2L6 4.5L10 3L12 5L10.5 8L13 14L11 13.5L8.5 9.5L6 12L6.5 14.5L5 14L4 11L1.5 10L1.5 9L4.5 8L3.5 5.5Z" fill="#efefef"/></svg>
<div class="a" style="left:1136px;top:1057px;width:16px;height:16px;border-radius:50%;background:#1b3c62"></div>
<svg class="a" style="left:1136px;top:1057px" width="16" height="16"><circle cx="10.5" cy="5.5" r="3" fill="none" stroke="#fff" stroke-width="1.4"/><path d="M0.5 9L5.5 11L9 7" fill="none" stroke="#fff" stroke-width="2"/><circle cx="5" cy="11" r="2" fill="#fff"/></svg>
<div class="a" style="left:1173px;top:1057px;width:16px;height:16px;border-radius:50%;background:#e8413c;border:3px solid #f0d8d0"></div>
<div class="a" style="left:1178px;top:1062px;width:6px;height:6px;border-radius:50%;background:#5a5ad0"></div>
<div class="a" style="left:1210px;top:1057px;width:16px;height:15px;background:#061b44;border:1px solid #7fb5ff;color:#8ec0ff;font:bold 8.5px/13px 'Liberation Sans';text-align:center">Ps</div>

<svg class="a" style="left:1702px;top:1060px" width="13" height="8"><path d="M0.8 7.5L6.5 1.5L12.2 7.5" fill="none" stroke="#eee" stroke-width="1.3"/></svg>
<svg class="a" style="left:1726px;top:1057px" width="12" height="16"><rect x="1" y="2.5" width="10" height="12.5" rx="1" fill="none" stroke="#eee" stroke-width="1.3"/><rect x="4" y="0.8" width="4" height="1.8" fill="#eee"/></svg>
<svg class="a" style="left:1747px;top:1058px" width="18" height="14"><path d="M1 4.5H4L8 1V13L4 9.5H1Z" fill="none" stroke="#eee" stroke-width="1.2"/><path d="M10.5 4.5Q12 7 10.5 9.5M13 3Q15.5 7 13 11" fill="none" stroke="#eee" stroke-width="1.1"/><path d="M15.5 1.5Q19 7 15.5 12.5" fill="none" stroke="#777" stroke-width="1.1"/></svg>
<svg class="a" style="left:1771px;top:1058px" width="18" height="15"><path d="M5.5 1.5H17V10H5.5M11 10V13.5M7 13.8H15" fill="none" stroke="#eee" stroke-width="1.2"/><rect x="0.8" y="1" width="5" height="4" fill="none" stroke="#eee" stroke-width="1.1"/><path d="M3.3 5V14" stroke="#eee" stroke-width="1.1"/></svg>
<div class="a t" style="left:1799px;top:1058.5px;font-size:13px;color:#f0f0f0;letter-spacing:-1px">РУС</div>
<div class="a t" style="left:1834px;top:1058.5px;font-size:13px;color:#f0f0f0;letter-spacing:-1px">15:01</div>
<svg class="a" style="left:1878px;top:1056px" width="18" height="18"><path d="M1 1H17V13H10.5L9 15L7.5 13H1Z" fill="#fafafa"/><path d="M4.5 4.5H13.5M4.5 7H13.5M4.5 9.5H10" stroke="#202022" stroke-width="1.2"/></svg>
<div class="a" style="left:1915px;top:1050px;width:1px;height:30px;background:#6a6a6a"></div>
</body></html>
